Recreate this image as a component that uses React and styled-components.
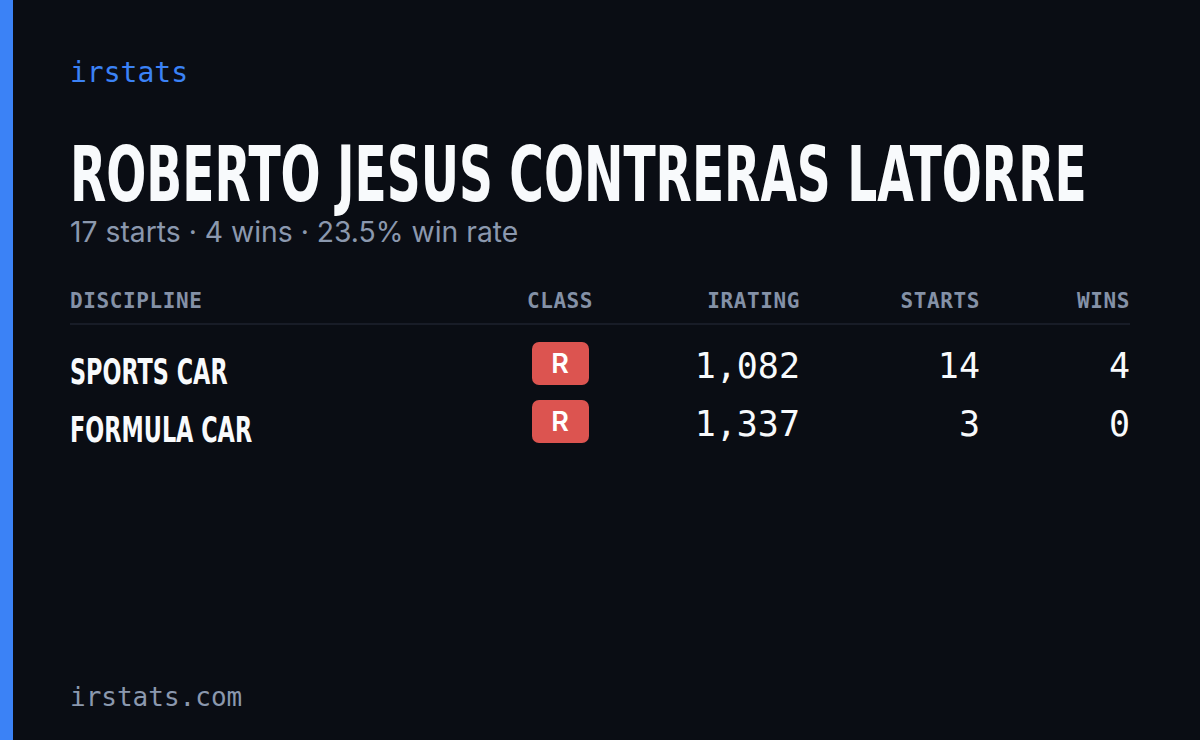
import styled, { createGlobalStyle } from 'styled-components';

const GlobalStyle = createGlobalStyle`
  html, body {
    margin: 0;
    padding: 0;
    background: #0a0d14;
    overflow: hidden;
  }
`;

const MONO = `"DejaVu Sans Mono", "Liberation Mono", monospace`;
const CONDENSED = `"Liberation Sans Narrow", "DejaVu Sans Condensed", "Liberation Sans", sans-serif`;

const Card = styled.div`
  display: flex;
  width: 1200px;
  height: 740px;
  background: #0a0d14;
  color: #f8fafc;
  box-sizing: border-box;
  overflow: hidden;
`;

const AccentBar = styled.div`
  width: 13px;
  flex-shrink: 0;
  background: #3b82f6;
`;

const Content = styled.main`
  flex: 1;
  display: flex;
  flex-direction: column;
  padding: 59px 70px 0 57px;
  min-width: 0;
`;

const Brand = styled.div`
  font-family: ${MONO};
  font-size: 28px;
  line-height: 1;
  color: #3b82f6;
`;

// tall narrow display face: set small, stretched up to the original's height
const Condensed = styled.span`
  display: block;
  font-family: ${CONDENSED};
  font-weight: 700;
  font-stretch: condensed;
  white-space: nowrap;
  transform: scaleY(${(p) => p.$stretch});
  transform-origin: center;
`;

const Title = styled.h1`
  margin: 48px 0 0;
  font-size: 52.4px;
  line-height: 77px;
  color: #f8fafc;
  font-weight: 700;
`;

const Summary = styled.p`
  margin: 6px 0 0;
  font-family: Inter, "Noto Sans", sans-serif;
  font-size: 28.3px;
  line-height: 1;
  color: #8b98ae;
`;

const Table = styled.div`
  margin-top: 45px;
  display: flex;
  flex-direction: column;
`;

const Row = styled.div`
  display: grid;
  grid-template-columns: 450px 80px 200px 180px 150px;
  align-items: center;
`;

const HeaderRow = styled(Row)`
  padding-bottom: 11px;
  border-bottom: 2px solid #181c27;
  margin-bottom: 17px;
`;

const HeadCell = styled.div`
  font-family: ${MONO};
  font-weight: 700;
  font-size: 21px;
  line-height: 1;
  letter-spacing: 0.6px;
  color: #8491a7;
  text-align: ${(p) => p.$align || 'left'};
`;

const BodyRows = styled.div`
  display: flex;
  flex-direction: column;
  gap: 15px;
`;

const DataRow = styled(Row)`
  height: 43px;
`;

const Discipline = styled.div`
  font-size: 24.85px;
  line-height: 35px;
  margin: 9px 0 -9px;
  color: #f8fafc;
`;

const BadgeCell = styled.div`
  display: flex;
  justify-content: center;
`;

const Badge = styled.div`
  width: 57px;
  height: 43px;
  border-radius: 7px;
  background: #dc5450;
  display: flex;
  align-items: center;
  justify-content: center;
  font-family: Inter, "Noto Sans", sans-serif;
  font-weight: 600;
  font-size: 27px;
  line-height: 1;
  color: #fff;
`;

const Num = styled.div`
  font-family: ${MONO};
  font-size: 35px;
  line-height: 1;
  text-align: right;
  margin: 3px 0 -3px;
  color: #f8fafc;
`;

const Footer = styled.div`
  margin-top: auto;
  margin-bottom: 30px;
  font-family: ${MONO};
  font-size: 26px;
  line-height: 1;
  color: #8b98ae;
`;

const rows = [
  { name: 'SPORTS CAR', cls: 'R', irating: '1,082', starts: 14, wins: 4 },
  { name: 'FORMULA CAR', cls: 'R', irating: '1,337', starts: 3, wins: 0 },
];

export default function App() {
  return (
    <>
      <GlobalStyle />
      <Card>
        <AccentBar />
        <Content>
          <Brand>irstats</Brand>
          <Title>
            <Condensed $stretch={1.47}>ROBERTO JESUS CONTRERAS LATORRE</Condensed>
          </Title>
          <Summary>17 starts · 4 wins · 23.5% win rate</Summary>
          <Table>
            <HeaderRow>
              <HeadCell>DISCIPLINE</HeadCell>
              <HeadCell $align="center">CLASS</HeadCell>
              <HeadCell $align="right">IRATING</HeadCell>
              <HeadCell $align="right">STARTS</HeadCell>
              <HeadCell $align="right">WINS</HeadCell>
            </HeaderRow>
            <BodyRows>
              {rows.map((r) => (
                <DataRow key={r.name}>
                  <Discipline>
                    <Condensed $stretch={1.408}>{r.name}</Condensed>
                  </Discipline>
                  <BadgeCell>
                    <Badge>{r.cls}</Badge>
                  </BadgeCell>
                  <Num>{r.irating}</Num>
                  <Num>{r.starts}</Num>
                  <Num>{r.wins}</Num>
                </DataRow>
              ))}
            </BodyRows>
          </Table>
          <Footer>irstats.com</Footer>
        </Content>
      </Card>
    </>
  );
}
